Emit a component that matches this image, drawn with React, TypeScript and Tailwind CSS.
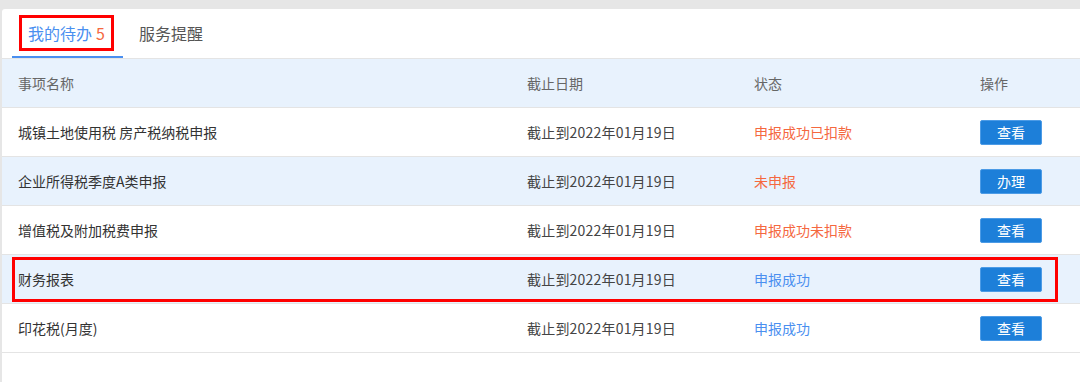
import { useState } from "react";

type Task = {
  name: string;
  deadline: string;
  status: string;
  tone: "orange" | "blue";
  action: string;
  marked?: boolean;
};

const tasks: Task[] = [
  { name: "城镇土地使用税 房产税纳税申报", deadline: "截止到2022年01月19日", status: "申报成功已扣款", tone: "orange", action: "查看" },
  { name: "企业所得税季度A类申报", deadline: "截止到2022年01月19日", status: "未申报", tone: "orange", action: "办理" },
  { name: "增值税及附加税费申报", deadline: "截止到2022年01月19日", status: "申报成功未扣款", tone: "orange", action: "查看" },
  { name: "财务报表", deadline: "截止到2022年01月19日", status: "申报成功", tone: "blue", action: "查看", marked: true },
  { name: "印花税(月度)", deadline: "截止到2022年01月19日", status: "申报成功", tone: "blue", action: "查看" },
];

const App = () => {
  const [tab, setTab] = useState(0);

  return (
    <div
      className="h-[382px] w-[1080px] overflow-hidden bg-[#e6e6e6] pt-[9px] pl-[2px] text-[14px] text-[#333]"
      style={{ fontFamily: '"Noto Sans CJK SC", "Microsoft YaHei", sans-serif' }}
    >
      <div className="h-full rounded-tl-[3px] bg-white">
        {/* tabs */}
        <div className="flex h-[50px] border-b border-[#e4e4e4] pl-[10px]">
          <button
            onClick={() => setTab(0)}
            className={`relative flex items-center pl-4 pr-[18px] text-[16px] border-b-2 ${tab === 0 ? "border-[#4a8ff0] text-[#4a8ff0]" : "border-transparent text-[#555]"}`}
          >
            我的待办 <span className="ml-1 text-[#f5683f]">5</span>
            <span className="pointer-events-none absolute left-[7px] right-[9px] top-[6px] bottom-[5px] border-[3px] border-[#f00]" />
          </button>
          <button
            onClick={() => setTab(1)}
            className={`flex items-center px-4 text-[16px] border-b-2 ${tab === 1 ? "border-[#4a8ff0] text-[#4a8ff0]" : "border-transparent text-[#555]"}`}
          >
            服务提醒
          </button>
        </div>

        {/* header */}
        <div className="grid h-[49px] grid-cols-[509px_227px_226px_1fr] items-center border-b border-[#e4e4e4] bg-[#e8f2fd] pl-4 text-[#666]">
          <div>事项名称</div>
          <div>截止日期</div>
          <div>状态</div>
          <div>操作</div>
        </div>

        {tasks.map((t, i) => (
          <div
            key={t.name}
            className={`relative grid h-[49px] grid-cols-[509px_227px_226px_1fr] items-center border-b border-[#e4e4e4] pl-4 ${i % 2 === 1 ? "bg-[#e8f2fd]" : "bg-white"}`}
          >
            <div>{t.name}</div>
            <div className="text-[#444] tracking-[0.2px]">{t.deadline}</div>
            <div className={t.tone === "orange" ? "text-[#f5683f]" : "text-[#4a8ff0]"}>{t.status}</div>
            <div>
              <button className="h-[25px] w-[62px] rounded-[2px] border border-[#4c9be6] bg-[#1d7fd9] text-white">
                {t.action}
              </button>
            </div>
            {t.marked && (
              <span className="pointer-events-none absolute left-[10px] right-[22px] top-[2px] bottom-[1px] border-[3px] border-[#f00]" />
            )}
          </div>
        ))}
      </div>
    </div>
  );
};

export default App;
